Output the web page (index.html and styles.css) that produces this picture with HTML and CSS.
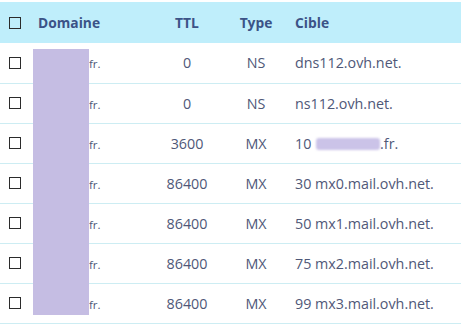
FILE: index.html
```html
<!DOCTYPE html>
<html lang="fr">
<head>
<meta charset="utf-8">
<link rel="stylesheet" href="styles.css">
</head>
<body>
<div class="wrap">
  <table class="zone">
    <colgroup>
      <col class="c-check"><col class="c-dom"><col class="c-ttl"><col class="c-type"><col class="c-cible">
    </colgroup>
    <thead>
      <tr>
        <th class="check"><span class="box"></span></th>
        <th class="dom">Domaine</th>
        <th class="ttl">TTL</th>
        <th class="type">Type</th>
        <th class="cible">Cible</th>
      </tr>
    </thead>
    <tbody>
      <tr><td class="check"><span class="box"></span></td><td class="dom"><span class="hidden-name"></span><span class="fr">fr.</span></td><td class="ttl">0</td><td class="type">NS</td><td class="cible">dns112.ovh.net.</td></tr>
      <tr><td class="check"><span class="box"></span></td><td class="dom"><span class="hidden-name"></span><span class="fr">fr.</span></td><td class="ttl">0</td><td class="type">NS</td><td class="cible">ns112.ovh.net.</td></tr>
      <tr><td class="check"><span class="box"></span></td><td class="dom"><span class="hidden-name"></span><span class="fr">fr.</span></td><td class="ttl">3600</td><td class="type">MX</td><td class="cible">10 <span class="blur"></span>.fr.</td></tr>
      <tr><td class="check"><span class="box"></span></td><td class="dom"><span class="hidden-name"></span><span class="fr">fr.</span></td><td class="ttl">86400</td><td class="type">MX</td><td class="cible">30 mx0.mail.ovh.net.</td></tr>
      <tr><td class="check"><span class="box"></span></td><td class="dom"><span class="hidden-name"></span><span class="fr">fr.</span></td><td class="ttl">86400</td><td class="type">MX</td><td class="cible">50 mx1.mail.ovh.net.</td></tr>
      <tr><td class="check"><span class="box"></span></td><td class="dom"><span class="hidden-name"></span><span class="fr">fr.</span></td><td class="ttl">86400</td><td class="type">MX</td><td class="cible">75 mx2.mail.ovh.net.</td></tr>
      <tr><td class="check"><span class="box"></span></td><td class="dom"><span class="hidden-name"></span><span class="fr">fr.</span></td><td class="ttl">86400</td><td class="type">MX</td><td class="cible">99 mx3.mail.ovh.net.</td></tr>
    </tbody>
  </table>
  <div class="redact"></div>
</div>
</body>
</html>
```

FILE: styles.css
```css
html, body {
  margin: 0;
  padding: 0;
  background: #fff;
}
body {
  font-family: "Open Sans", "Noto Sans", sans-serif;
  color: #4f5878;
}
.wrap {
  position: relative;
  width: 461px;
  padding-top: 2px;
}
.zone {
  width: 461px;
  border-collapse: collapse;
  table-layout: fixed;
}
.c-check { width: 33px; }
.c-dom { width: 117px; }
.c-ttl { width: 74px; }
.c-type { width: 62px; }
.c-cible { width: 175px; }

thead tr {
  background: #bfeefb;
  height: 41px;
}
th {
  font-size: 13.8px;
  font-weight: 700;
  color: #3b5387;
  padding: 0;
  vertical-align: middle;
}
tbody tr {
  height: 40px;
  border-bottom: 1px solid #cdedf3;
}
td {
  font-size: 14.3px;
  padding: 0;
  vertical-align: middle;
}
.check { text-align: left; padding-left: 9px; }
.box {
  display: block;
  width: 10px;
  height: 10px;
  border: 1px solid #2b2b2b;
  background: #fff;
}
thead .box { background: transparent; margin-top: 1px; }
.dom { text-align: left; padding-left: 5px; }
td.dom { padding-left: 0; }
.hidden-name {
  display: inline-block;
  width: 56px;
}
.fr { font-size: 11.5px; }
.ttl { text-align: center; }
.type { text-align: center; padding-left: 2px; }
.cible { text-align: left; padding-left: 9px; }
.blur {
  display: inline-block;
  width: 64px;
  height: 12px;
  vertical-align: -1px;
  background: #cbc3e8;
  border-radius: 3px;
  filter: blur(1px);
  margin-left: 1px;
}
.redact {
  position: absolute;
  left: 33px;
  top: 49px;
  width: 56px;
  height: 266px;
  background: #c5bde3;
}
```
